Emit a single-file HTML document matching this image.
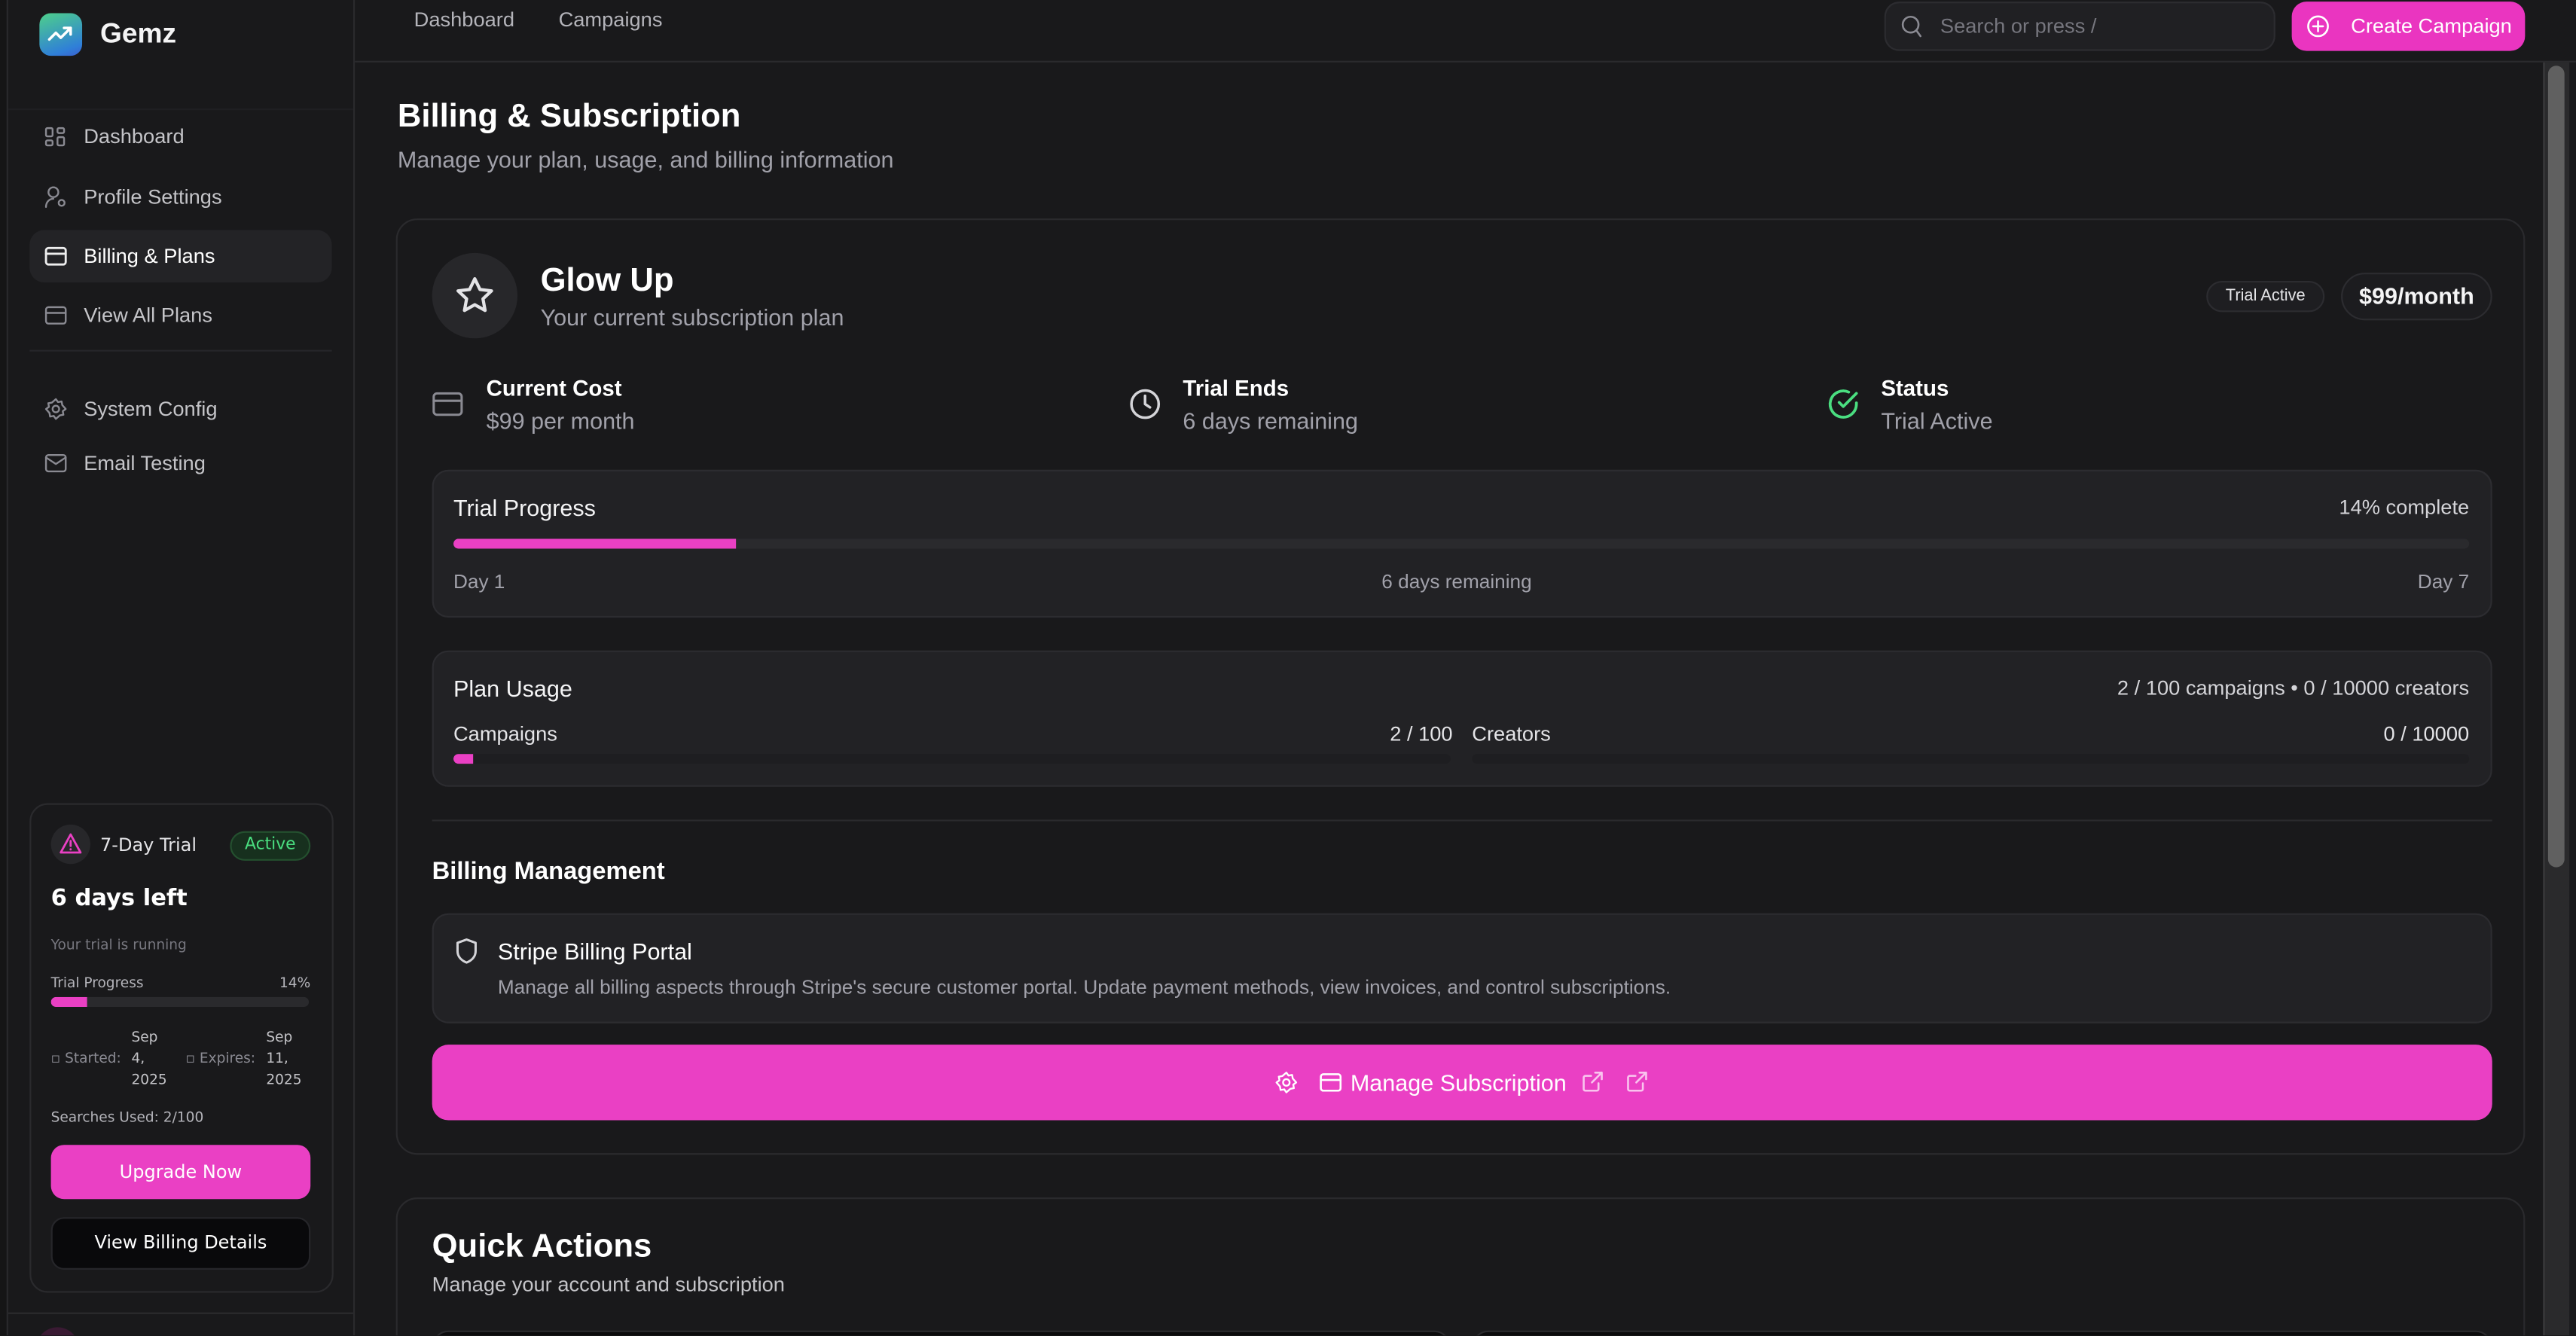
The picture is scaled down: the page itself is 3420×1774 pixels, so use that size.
<!DOCTYPE html>
<html><head><meta charset="utf-8"><style>
*{box-sizing:border-box;margin:0;padding:0}
html,body{width:3420px;height:1774px;overflow:hidden;background:#19191b}
#w{position:absolute;left:0;top:0;width:1568px;height:813px;transform:scale(2.1811);transform-origin:0 0;background:#19191b;font-family:"Liberation Sans",sans-serif;color:#f4f4f5;overflow:hidden}
.a{position:absolute;white-space:nowrap}
.g{color:#a1a1aa}
.box{position:absolute;border:1px solid #2c2c30;border-radius:10px;background:#222225}
.bar{position:absolute;height:6px;border-radius:3px;background:#2a2a2d;overflow:hidden}
.bar i{position:absolute;left:0;top:0;bottom:0;background:#ea40c4;border-radius:3px 0 0 3px}
svg{position:absolute;fill:none;stroke-linecap:round;stroke-linejoin:round}
.sb{font-family:"DejaVu Sans",sans-serif}
</style></head><body><div id="w">
<div class="a" style="left:0;top:0;width:5px;height:813px;background:#151516;border-right:1px solid #2a2a2d"></div>
<div class="a" style="left:5px;top:0;width:211px;height:813px;border-right:1px solid #2a2a2d;background:#19191b"></div>
<div class="a" style="left:5px;top:66px;width:210px;height:1px;background:#1f1f22"></div>
<div class="a" style="left:24px;top:8px;width:26px;height:26px;border-radius:7px;background:linear-gradient(160deg,#4ed08a,#2f7fd8 80%,#3b5fd0)"></div>
<svg style="left:29px;top:14px" width="16" height="14" viewBox="0 0 16 14" stroke="#fff" stroke-width="1.6"><path d="M1 10l4-4 3 3 6-6M10 3h4v4"/></svg>
<div class="a" style="left:61px;top:11px;font-size:17px;font-weight:700">Gemz</div>

<svg style="left:27px;top:77px" width="13" height="13" viewBox="0 0 13 13" stroke="#8a8a92" stroke-width="1.1"><rect x="1" y="1" width="4" height="5" rx=".8"/><rect x="8" y="1" width="4" height="3" rx=".8"/><rect x="1" y="8.5" width="4" height="3" rx=".8"/><rect x="8" y="6.5" width="4" height="5" rx=".8"/></svg>
<div class="a" style="left:51px;top:76px;font-size:12.5px;color:#c4c4c8">Dashboard</div>
<svg style="left:27px;top:113px" width="14" height="14" viewBox="0 0 14 14" stroke="#8a8a92" stroke-width="1.1"><circle cx="5.5" cy="4" r="3"/><path d="M1 13c0-3 2-5 4.5-5"/><circle cx="10.5" cy="10.5" r="1.8"/></svg>
<div class="a" style="left:51px;top:113px;font-size:12.5px;color:#c4c4c8">Profile Settings</div>
<div class="a" style="left:18px;top:140px;width:184px;height:32px;border-radius:9px;background:#232326"></div>
<svg style="left:27px;top:150px" width="14" height="12" viewBox="0 0 14 12" stroke="#eee" stroke-width="1.3"><rect x="1" y="1" width="12" height="10" rx="1.5"/><path d="M1 4.5h12"/></svg>
<div class="a" style="left:51px;top:149px;font-size:12.5px;color:#fff">Billing &amp; Plans</div>
<svg style="left:27px;top:186px" width="14" height="12" viewBox="0 0 14 12" stroke="#8a8a92" stroke-width="1.1"><rect x="1" y="1" width="12" height="10" rx="1.5"/><path d="M1 4.5h12"/></svg>
<div class="a" style="left:51px;top:185px;font-size:12.5px;color:#c4c4c8">View All Plans</div>
<div class="a" style="left:18px;top:213px;width:184px;height:1px;background:#26262a"></div>
<svg style="left:27px;top:242px" width="14" height="14" viewBox="0 0 14 14" stroke="#8a8a92" stroke-width="1.1"><circle cx="7" cy="7" r="2"/><path d="M7 1l1.3 1.8 2.2-.4.4 2.2L13 7l-1.8 1.3.4 2.2-2.2.4L7 13l-1.3-1.8-2.2.4-.4-2.2L1 7l1.8-1.3-.4-2.2 2.2-.4z"/></svg>
<div class="a" style="left:51px;top:242px;font-size:12.5px;color:#c4c4c8">System Config</div>
<svg style="left:27px;top:276px" width="14" height="12" viewBox="0 0 14 12" stroke="#8a8a92" stroke-width="1.1"><rect x="1" y="1" width="12" height="10" rx="1.5"/><path d="M1 2.5l6 4 6-4"/></svg>
<div class="a" style="left:51px;top:275px;font-size:12.5px;color:#c4c4c8">Email Testing</div>

<div class="a sb" style="left:18px;top:489px;width:185px;height:298px;border:1px solid #2a2a2d;border-radius:11px;background:#19191b">
 <div class="a" style="left:12px;top:12px;width:24px;height:24px;border-radius:12px;background:#27272a"></div>
 <svg style="left:17px;top:17px" width="14" height="13" viewBox="0 0 14 13" stroke="#ea40c4" stroke-width="1.3"><path d="M7 1L1 12h12z M7 5v3M7 10v.1"/></svg>
 <div class="a" style="left:42px;top:18px;font-size:11px;color:#e4e4e7">7-Day Trial</div>
 <div class="a" style="left:121px;top:16px;width:49px;height:18px;border-radius:9px;background:#17301e;border:1px solid #24502f;color:#4ade80;font-size:10px;text-align:center;line-height:16px">Active</div>
 <div class="a" style="left:12px;top:49px;font-size:14px;font-weight:700;color:#fff">6 days left</div>
 <div class="a" style="left:12px;top:81px;font-size:8.5px;color:#76767e">Your trial is running</div>
 <div class="a" style="left:12px;top:104px;font-size:8.5px;color:#b4b4ba">Trial Progress</div>
 <div class="a" style="right:13px;top:104px;font-size:8.5px;color:#b4b4ba">14%</div>
 <div class="bar" style="left:12px;top:117px;width:157px;height:6px"><i style="width:22px"></i></div>
 <div class="a" style="left:12px;top:136px;font-size:8.5px;color:#8a8a92;line-height:13px"><span style="position:absolute;top:13px;left:0">▫ Started:</span><span style="position:absolute;left:49px;color:#c4c4c8">Sep<br>4,<br>2025</span></div>
 <div class="a" style="left:94px;top:136px;font-size:8.5px;color:#8a8a92;line-height:13px"><span style="position:absolute;top:13px;left:0">▫ Expires:</span><span style="position:absolute;left:49px;color:#c4c4c8">Sep<br>11,<br>2025</span></div>
 <div class="a" style="left:12px;top:186px;font-size:8.5px;color:#b4b4ba">Searches Used: 2/100</div>
 <div class="a" style="left:12px;top:207px;width:158px;height:33px;border-radius:8px;background:#ea40c4;color:#fff;font-size:11px;text-align:center;line-height:33px">Upgrade Now</div>
 <div class="a" style="left:12px;top:251px;width:158px;height:32px;border-radius:8px;background:#09090b;border:1px solid #26262a;color:#fff;font-size:11px;text-align:center;line-height:30px">View Billing Details</div>
</div>
<div class="a" style="left:5px;top:799px;width:210px;height:1px;background:#2a2a2d"></div>
<div class="a" style="left:22px;top:808px;width:26px;height:26px;border-radius:13px;background:#3a1a33"></div>

<div class="a" style="left:216px;top:37px;width:1352px;height:1px;background:#2a2a2d"></div>
<div class="a" style="left:252px;top:5px;font-size:12.5px;color:#b4b4ba">Dashboard</div>
<div class="a" style="left:340px;top:5px;font-size:12.5px;color:#b4b4ba">Campaigns</div>
<div class="a" style="left:1147px;top:1px;width:238px;height:30px;border-radius:9px;background:#202023;border:1px solid #2c2c30"></div>
<svg style="left:1157px;top:9px" width="13" height="14" viewBox="0 0 13 14" stroke="#8a8a92" stroke-width="1.2"><circle cx="6" cy="6" r="4.8"/><path d="M9.5 9.5L12 13"/></svg>
<div class="a" style="left:1181px;top:9px;font-size:12.5px;color:#76767e">Search or press /</div>
<div class="a" style="left:1395px;top:1px;width:142px;height:30px;border-radius:9px;background:#ea35c0"></div>
<svg style="left:1404px;top:9px" width="14" height="14" viewBox="0 0 14 14" stroke="#fff" stroke-width="1.2"><circle cx="7" cy="7" r="6"/><path d="M7 4v6M4 7h6"/></svg>
<div class="a" style="left:1431px;top:9px;font-size:12.5px;color:#fff;font-weight:500">Create Campaign</div>
<div class="a" style="left:1548px;top:38px;width:16px;height:775px;background:#2a2a2c;border-left:1px solid #3a3a3c"></div>
<div class="a" style="left:1551px;top:40px;width:10px;height:488px;border-radius:5px;background:#606060"></div>

<div class="a" style="left:242px;top:60px;font-size:20px;font-weight:700;color:#fff">Billing &amp; Subscription</div>
<div class="a g" style="left:242px;top:89px;font-size:14px">Manage your plan, usage, and billing information</div>

<div class="a" style="left:241px;top:133px;width:1296px;height:570px;border:1px solid #2a2a2d;border-radius:13px;background:#19191b"></div>
<div class="a" style="left:263px;top:154px;width:52px;height:52px;border-radius:26px;background:#27272a"></div>
<svg style="left:276px;top:167px" width="26" height="26" viewBox="0 0 24 24" stroke="#e4e4e7" stroke-width="1.8"><path d="M12 2.5l2.9 6 6.5.8-4.8 4.5 1.2 6.5L12 17.1l-5.8 3.2 1.2-6.5-4.8-4.5 6.5-.8z"/></svg>
<div class="a" style="left:329px;top:160px;font-size:20px;font-weight:700;color:#fff">Glow Up</div>
<div class="a g" style="left:329px;top:185px;font-size:14px">Your current subscription plan</div>
<div class="a" style="left:1343px;top:171px;width:72px;height:19px;border-radius:10px;border:1px solid #2c2c30;background:#1e1e21;font-size:10px;text-align:center;line-height:17px;color:#e4e4e7">Trial Active</div>
<div class="a" style="left:1425px;top:166px;width:92px;height:29px;border-radius:15px;border:1px solid #2c2c30;background:#1c1c1f;font-size:14px;font-weight:700;text-align:center;line-height:27px;color:#f4f4f5">$99/month</div>

<svg style="left:263px;top:238px" width="19" height="16" viewBox="0 0 19 16" stroke="#8a8a92" stroke-width="1.4"><rect x="1" y="1.5" width="17" height="13" rx="2"/><path d="M1 6h17"/></svg>
<div class="a" style="left:296px;top:229px;font-size:13.5px;font-weight:600;color:#fff">Current Cost</div>
<div class="a g" style="left:296px;top:248px;font-size:14px">$99 per month</div>
<svg style="left:687px;top:236px" width="20" height="20" viewBox="0 0 20 20" stroke="#d4d4d8" stroke-width="1.6"><circle cx="10" cy="10" r="8.3"/><path d="M10 5v5l3 2"/></svg>
<div class="a" style="left:720px;top:229px;font-size:13.5px;font-weight:600;color:#fff">Trial Ends</div>
<div class="a g" style="left:720px;top:248px;font-size:14px">6 days remaining</div>
<svg style="left:1112px;top:236px" width="20" height="20" viewBox="0 0 20 20" stroke="#4ade80" stroke-width="1.7"><path d="M18 9.3V10a8 8 0 1 1-4.7-7.3"/><path d="M18 3.5L10 11.5l-2.5-2.5"/></svg>
<div class="a" style="left:1145px;top:229px;font-size:13.5px;font-weight:600;color:#fff">Status</div>
<div class="a g" style="left:1145px;top:248px;font-size:14px">Trial Active</div>

<div class="box" style="left:263px;top:286px;width:1254px;height:90px"></div>
<div class="a" style="left:276px;top:301px;font-size:14px;color:#f4f4f5">Trial Progress</div>
<div class="a" style="right:65px;top:302px;font-size:12.5px;color:#d4d4d8">14% complete</div>
<div class="bar" style="left:276px;top:328px;width:1227px"><i style="width:172px"></i></div>
<div class="a g" style="left:276px;top:347px;font-size:12px">Day 1</div>
<div class="a g" style="left:841px;top:347px;font-size:12px">6 days remaining</div>
<div class="a g" style="right:65px;top:347px;font-size:12px">Day 7</div>

<div class="box" style="left:263px;top:396px;width:1254px;height:83px"></div>
<div class="a" style="left:276px;top:411px;font-size:14px;color:#f4f4f5">Plan Usage</div>
<div class="a" style="right:65px;top:412px;font-size:12.5px;color:#d4d4d8">2 / 100 campaigns • 0 / 10000 creators</div>
<div class="a" style="left:276px;top:440px;font-size:12.5px;color:#e4e4e7">Campaigns</div>
<div class="a" style="left:846px;top:440px;font-size:12.5px;color:#e4e4e7">2 / 100</div>
<div class="bar" style="left:276px;top:459px;width:607px;background:#1e1e21"><i style="width:12px"></i></div>
<div class="a" style="left:896px;top:440px;font-size:12.5px;color:#e4e4e7">Creators</div>
<div class="a" style="right:65px;top:440px;font-size:12.5px;color:#e4e4e7">0 / 10000</div>
<div class="bar" style="left:896px;top:459px;width:607px;background:#1e1e21"></div>

<div class="a" style="left:263px;top:499px;width:1254px;height:1px;background:#2a2a2d"></div>
<div class="a" style="left:263px;top:522px;font-size:15px;font-weight:600;color:#fff">Billing Management</div>

<div class="box" style="left:263px;top:556px;width:1254px;height:67px"></div>
<svg style="left:277px;top:571px" width="14" height="16" viewBox="0 0 14 16" stroke="#d4d4d8" stroke-width="1.4"><path d="M7 1l5.5 2v5c0 3.5-2.5 5.8-5.5 7-3-1.2-5.5-3.5-5.5-7V3z"/></svg>
<div class="a" style="left:303px;top:571px;font-size:14px;color:#fff">Stripe Billing Portal</div>
<div class="a g" style="left:303px;top:594px;font-size:12px">Manage all billing aspects through Stripe's secure customer portal. Update payment methods, view invoices, and control subscriptions.</div>

<div class="a" style="left:263px;top:636px;width:1254px;height:46px;border-radius:10px;background:#ea40c4"></div>
<svg style="left:776px;top:652px" width="14" height="14" viewBox="0 0 14 14" stroke="#fff" stroke-width="1.1"><circle cx="7" cy="7" r="2"/><path d="M7 1l1.3 1.8 2.2-.4.4 2.2L13 7l-1.8 1.3.4 2.2-2.2.4L7 13l-1.3-1.8-2.2.4-.4-2.2L1 7l1.8-1.3-.4-2.2 2.2-.4z"/></svg>
<svg style="left:803px;top:653px" width="14" height="12" viewBox="0 0 14 12" stroke="#fff" stroke-width="1.2"><rect x="1" y="1" width="12" height="10" rx="1.5"/><path d="M1 4.5h12"/></svg>
<div class="a" style="left:822px;top:651px;font-size:14px;color:#fff">Manage Subscription</div>
<svg style="left:963px;top:652px" width="13" height="13" viewBox="0 0 13 13" stroke="#f9c4ee" stroke-width="1.2"><path d="M10 7.5V11a1 1 0 0 1-1 1H2a1 1 0 0 1-1-1V4a1 1 0 0 1 1-1h3.5M8 1h4v4M6 7l6-6"/></svg>
<svg style="left:990px;top:652px" width="13" height="13" viewBox="0 0 13 13" stroke="#f9c4ee" stroke-width="1.2"><path d="M10 7.5V11a1 1 0 0 1-1 1H2a1 1 0 0 1-1-1V4a1 1 0 0 1 1-1h3.5M8 1h4v4M6 7l6-6"/></svg>

<div class="a" style="left:241px;top:729px;width:1296px;height:120px;border:1px solid #2a2a2d;border-radius:13px;background:#19191b"></div>
<div class="a" style="left:263px;top:748px;font-size:20px;font-weight:600;color:#fff">Quick Actions</div>
<div class="a" style="left:263px;top:775px;font-size:12.5px;color:#c4c4c8">Manage your account and subscription</div>
<div class="a" style="left:263px;top:810px;width:620px;height:20px;border-radius:10px;background:#0b0b0c;border:1px solid #2a2a2d"></div>
<div class="a" style="left:896px;top:810px;width:621px;height:20px;border-radius:10px;background:#0b0b0c;border:1px solid #2a2a2d"></div>
</div></body></html>
